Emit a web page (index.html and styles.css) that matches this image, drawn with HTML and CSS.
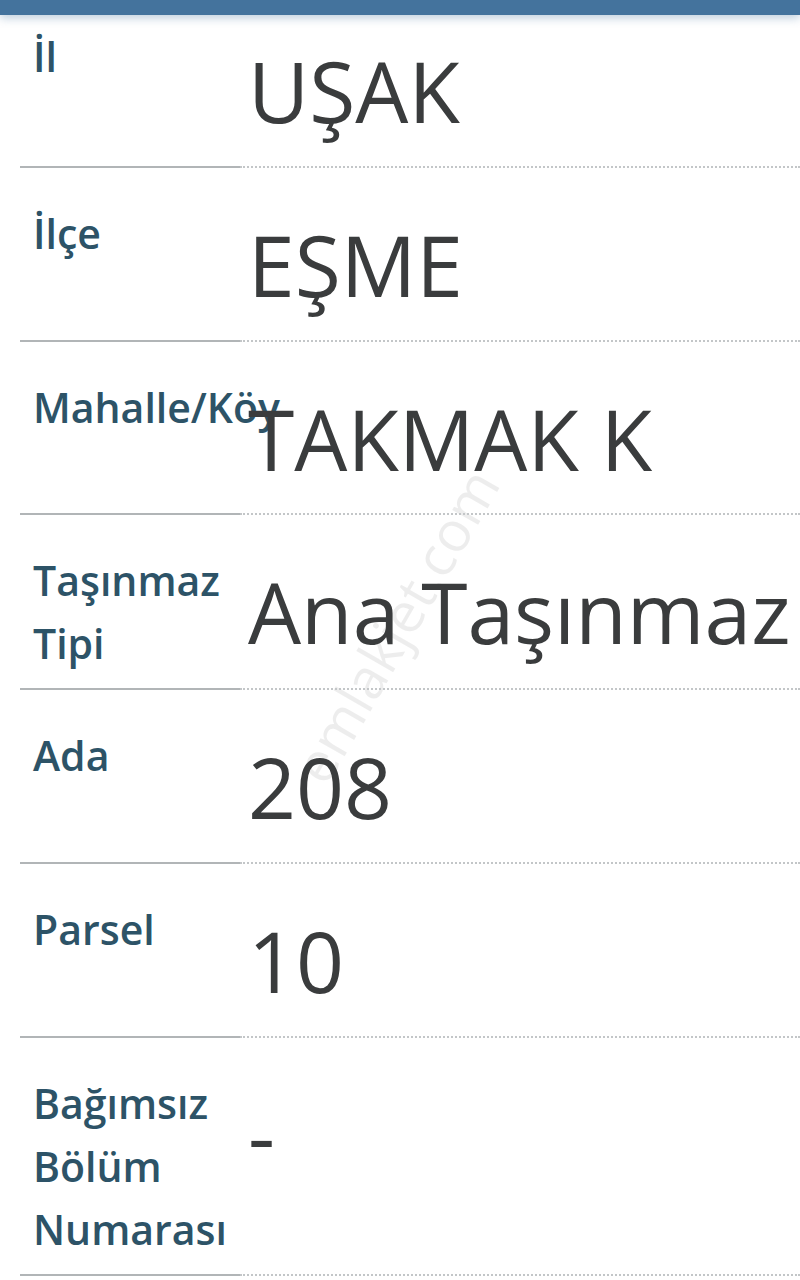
FILE: index.html
```html
<!DOCTYPE html>
<html lang="tr">
<head>
  <meta charset="UTF-8">
  <meta name="viewport" content="width=device-width, initial-scale=1.0">
  <title>Parsel Bilgileri</title>
  <link rel="stylesheet" href="styles.css">
</head>
<body>
  <div class="topbar"></div>
  <div class="parcel">
    <div class="row row-first">
      <div class="label">İl</div>
      <div class="value">UŞAK</div>
    </div>
    <div class="row">
      <div class="label">İlçe</div>
      <div class="value">EŞME</div>
    </div>
    <div class="row">
      <div class="label nowrap">Mahalle/Köy</div>
      <div class="value">TAKMAK K</div>
    </div>
    <div class="row">
      <div class="label">Taşınmaz Tipi</div>
      <div class="value">Ana Taşınmaz</div>
    </div>
    <div class="row">
      <div class="label">Ada</div>
      <div class="value">208</div>
    </div>
    <div class="row">
      <div class="label">Parsel</div>
      <div class="value">10</div>
    </div>
    <div class="row">
      <div class="label">Bağımsız Bölüm Numarası</div>
      <div class="value">-</div>
    </div>
    <div class="watermark">emlakjet.com</div>
  </div>
</body>
</html>
```

FILE: styles.css
```css
* { box-sizing: border-box; }
body {
  margin: 0;
  background: #ffffff;
  font-family: "Open Sans", "Noto Sans", sans-serif;
  overflow: hidden;
}
.topbar {
  height: 15px;
  background: #44739d;
  box-shadow: 0 3px 10px rgba(68, 115, 157, 0.35);
  position: relative;
  z-index: 2;
}
.parcel {
  position: relative;
  margin-left: 20px;
}
.row {
  display: grid;
  grid-template-columns: 220px 1fr;
}
.label {
  padding: 34px 0 13px 13px;
  border-bottom: 2px solid #b1b5b7;
  font-size: 41px;
  line-height: 63px;
  font-weight: 600;
  color: #2d5367;
  position: relative;
  z-index: 1;
}
.nowrap {
  white-space: nowrap;
}
.value {
  padding: 47px 0 24px 8px;
  border-bottom: 2px dotted #c3c6c8;
  font-size: 84px;
  line-height: 1.2;
  font-weight: 400;
  color: #3a3c3d;
  white-space: nowrap;
  position: relative;
  z-index: 1;
}
.row-first .label {
  padding-top: 10px;
}
.row-first .value {
  padding-top: 26px;
}
.watermark {
  position: absolute;
  left: 375px;
  top: 610px;
  transform: translate(-50%, -50%) rotate(-60deg);
  font-size: 56px;
  color: rgba(0, 0, 0, 0.07);
  white-space: nowrap;
  pointer-events: none;
  z-index: 0;
}
```
